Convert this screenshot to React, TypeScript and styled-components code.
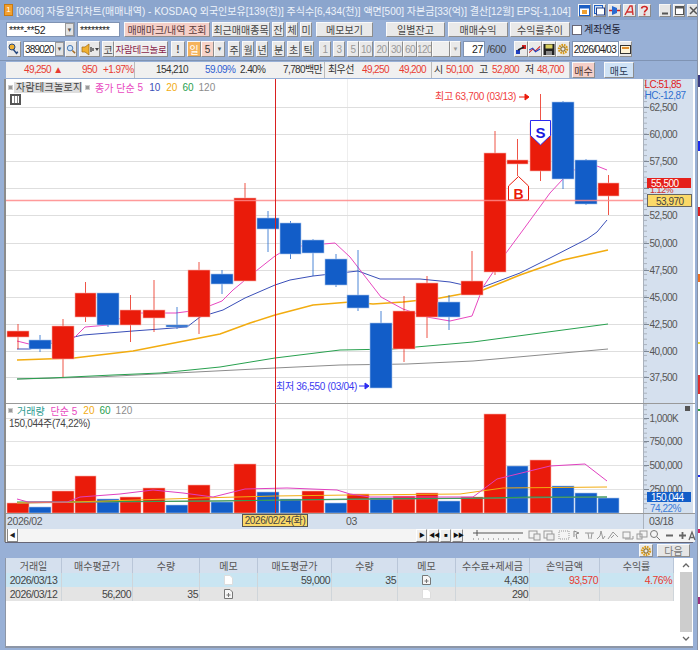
import React from "react"
import styled, { createGlobalStyle } from "styled-components"

const FONT = `"Liberation Sans", "Noto Sans CJK KR", sans-serif`

const GlobalStyle = createGlobalStyle`
  html, body {
    margin: 0;
    padding: 0;
    background: #fff;
  }
`

const Page = styled.div`
  width: 700px;
  height: 650px;
  overflow: hidden;
  position: relative;
  background: #fff;
  font-family: ${FONT};
  font-size: 10px;
  color: #333;
`

const Window = styled.div`
  width: 698px;
  height: 650px;
  box-sizing: border-box;
  display: flex;
  flex-direction: column;
  background: #98b0d6;
  border-right: 1px solid #8793a8;
`

// bits of the window behind, showing past the right edge
const BehindMark = styled.i<{ $top: number; $h: number; $c: string }>`
  position: absolute;
  left: 698px;
  top: ${(p) => p.$top}px;
  width: 2px;
  height: ${(p) => p.$h}px;
  background: ${(p) => p.$c};
`

const TitleBar = styled.div`
  height: 20px;
  flex: none;
  display: flex;
  align-items: center;
  padding-left: 4px;
  background: #8ba5cd;
  color: #eef3fa;
  font-size: 10px;
  white-space: nowrap;
  overflow: hidden;
`

const TitleBadge = styled.span`
  width: 9px;
  height: 12px;
  flex: none;
  background: #f3a02e;
  border: 1px solid #c77a12;
  box-sizing: border-box;
  color: #fff;
  font-size: 8px;
  line-height: 10px;
  text-align: center;
  margin-right: 3px;
`

const TitleText = styled.span`
  flex: none;
  width: 561px;
`

const TitleIcons = styled.div`
  display: flex;
  gap: 2px;
  margin-left: 1px;
`

const WinButton = styled.div<{ $ml?: number; $w?: number }>`
  width: ${(p) => p.$w ?? 13}px;
  height: 13px;
  margin-left: ${(p) => p.$ml ?? 0}px;
  background: #e6e6e6;
  border: 1px solid #f6f6f6;
  border-right-color: #8a8a8a;
  border-bottom-color: #8a8a8a;
  box-sizing: border-box;
  display: flex;
  align-items: center;
  justify-content: center;
`

const Row = styled.div<{ $h: number; $mt: number }>`
  height: ${(p) => p.$h}px;
  margin-top: ${(p) => p.$mt}px;
  flex: none;
  display: flex;
  align-items: stretch;
  padding-left: 6px;
`

const Field = styled.div<{ $w: number; $ml?: number; $right?: boolean; $tight?: boolean }>`
  width: ${(p) => p.$w}px;
  margin-left: ${(p) => p.$ml ?? 0}px;
  flex: none;
  box-sizing: border-box;
  background: #fff;
  border: 1px solid #7f93b3;
  display: flex;
  align-items: center;
  justify-content: ${(p) => (p.$right ? "flex-end" : "flex-start")};
  padding: 0 1px 0 ${(p) => (p.$tight ? 1 : 2)}px;
  font-size: ${(p) => (p.$tight ? 10 : 10.5)}px;
  letter-spacing: ${(p) => (p.$tight ? -0.8 : -0.4)}px;
  color: #222;
  overflow: hidden;
  white-space: nowrap;
`

const DropArrow = styled.span`
  width: 9px;
  align-self: stretch;
  margin-left: auto;
  margin-right: -1px;
  flex: none;
  background: #e2e2e2;
  border: 1px solid #9a9a9a;
  box-sizing: border-box;
  color: #555;
  font-size: 6px;
  line-height: 12px;
  text-align: center;
  letter-spacing: 0;
`

const Btn = styled.div<{ $w: number; $ml?: number; $bg?: string; $fg?: string; $tiny?: boolean }>`
  width: ${(p) => p.$w}px;
  margin-left: ${(p) => p.$ml ?? 0}px;
  flex: none;
  box-sizing: border-box;
  background: ${(p) => p.$bg ?? "#e9e9e9"};
  color: ${(p) => p.$fg ?? "#444"};
  border: 1px solid #fafafa;
  border-right-color: #8d8d8d;
  border-bottom-color: #8d8d8d;
  display: flex;
  align-items: center;
  justify-content: center;
  font-size: ${(p) => (p.$tiny ? 6 : 10)}px;
  white-space: nowrap;
  overflow: hidden;
`

const CodeName = styled(Btn)`
  font-size: 9.5px;
  letter-spacing: -0.2px;
`

const PeriodBtn = styled(Btn)`
  color: #999;
  letter-spacing: -0.5px;
`

const CheckBox = styled.span`
  width: 10px;
  height: 10px;
  margin: 3px 2px 0 2px;
  flex: none;
  background: #fff;
  border: 1px solid #667;
  box-sizing: border-box;
`

const CheckLabel = styled.span`
  font-size: 10px;
  line-height: 16px;
  color: #223;
`

const PlainText = styled.span<{ $ml?: number }>`
  margin-left: ${(p) => p.$ml ?? 0}px;
  font-size: 10.5px;
  letter-spacing: -0.4px;
  line-height: 17px;
  color: #444;
`

const IconBtn = styled.div<{ $ml?: number; $w?: number }>`
  width: ${(p) => p.$w ?? 14}px;
  margin-left: ${(p) => p.$ml ?? 0}px;
  flex: none;
  box-sizing: border-box;
  background: #e9e9e9;
  border: 1px solid #fafafa;
  border-right-color: #8d8d8d;
  border-bottom-color: #8d8d8d;
  display: flex;
  align-items: center;
  justify-content: center;
  overflow: hidden;
`

const QuoteRow = styled.div`
  height: 18px;
  margin-top: 3px;
  padding-top: 1px;
  border-top: 1px solid #7f93b3;
  box-sizing: border-box;
  flex: none;
  display: flex;
  padding-left: 6px;
  align-items: stretch;
`

const QuoteCell = styled.div<{ $w: number }>`
  width: ${(p) => p.$w}px;
  flex: none;
  position: relative;
  box-sizing: border-box;
  background: #f0f0f0;
  border-right: 1px solid #bbb;
  font-size: 10px;
  letter-spacing: -0.6px;
  line-height: 16px;
  overflow: hidden;
  white-space: nowrap;
`

const Quote = styled.span<{ $x: number; $c?: string }>`
  position: absolute;
  left: ${(p) => p.$x}px;
  top: 0;
  color: ${(p) => p.$c ?? "#333"};
`

const ChartFrame = styled.div`
  margin-left: 4px;
  margin-top: 1px;
  width: 689px;
  flex: none;
  border-left: 2px solid #8c8c8c;
  display: flex;
  flex-direction: column;
  background: #fff;
`

const Pane = styled.div<{ $h: number }>`
  height: ${(p) => p.$h}px;
  flex: none;
  display: flex;
  border-bottom: 1px solid #999;
  position: relative;
`

const Plot = styled.svg`
  width: 637px;
  height: 100%;
  display: block;
  flex: none;
  font-family: ${FONT};
`

const Axis = styled.svg`
  width: 50px;
  height: 100%;
  display: block;
  flex: none;
  background: #d5e0ee;
  font-family: ${FONT};
  letter-spacing: -0.5px;
`

const Legend = styled.div<{ $top: number }>`
  position: absolute;
  left: 2px;
  top: ${(p) => p.$top}px;
  height: 12px;
  display: flex;
  align-items: center;
  font-size: 10px;
  white-space: nowrap;
`

const LegendDot = styled.i<{ $ml?: number }>`
  width: 3px;
  height: 3px;
  margin-left: ${(p) => p.$ml ?? 0}px;
  background: #999;
  border: 1px solid #ccc;
  flex: none;
`

const LegendChip = styled.span`
  margin-left: 1px;
  padding: 0 2px;
  width: 64px;
  height: 11px;
  line-height: 11px;
  background: #ddd;
  color: #444;
  font-size: 10px;
  letter-spacing: 0.3px;
`

const LegendItem = styled.span<{ $c: string; $ml: number }>`
  margin-left: ${(p) => p.$ml}px;
  color: ${(p) => p.$c};
`

const LegendNote = styled.div`
  position: absolute;
  left: 3px;
  top: 11px;
  font-size: 10px;
  letter-spacing: -0.3px;
  color: #444;
`

const GridToggle = styled.div`
  position: absolute;
  left: 4px;
  top: 15px;
  width: 11px;
  height: 11px;
  box-sizing: border-box;
  border: 2px solid #555;
  background: repeating-linear-gradient(90deg, #fff 0 2px, #888 2px 3px);
`

const TimeAxis = styled.div`
  height: 15px;
  flex: none;
  display: flex;
  background: #d5e0ee;
  font-size: 10.5px;
  letter-spacing: -0.4px;
  line-height: 15px;
  color: #555;
`

const TimeTrack = styled.div`
  width: 637px;
  flex: none;
  position: relative;
  padding-left: 1px;
  box-sizing: border-box;
`

const TimeMark = styled.span`
  position: absolute;
  left: 340px;
`

const TimeEnd = styled.div`
  width: 50px;
  flex: none;
  border-left: 1px solid #aab2bd;
  box-sizing: border-box;
  padding-left: 5px;
`

const DateTip = styled.div`
  position: absolute;
  left: 236px;
  top: 0;
  width: 66px;
  height: 13px;
  background: #fbd968;
  border: 1px solid #555;
  box-sizing: border-box;
  font-size: 10px;
  letter-spacing: -0.4px;
  line-height: 11px;
  text-align: center;
  color: #444;
  white-space: nowrap;
`

const NavBar = styled.div`
  height: 13px;
  flex: none;
  margin-left: 4px;
  width: 689px;
  border-left: 2px solid #8c8c8c;
  display: flex;
  align-items: stretch;
  background: #f4f4f4;
`

const NavArrow = styled.div`
  width: 11px;
  margin-left: 1px;
  flex: none;
  background: #fff;
  border: 1px solid #888;
  border-top: none;
  box-sizing: border-box;
  font-size: 6px;
  line-height: 12px;
  text-align: center;
  color: #222;
`

const NavSpacer = styled.div`
  width: 398px;
  flex: none;
`

const NavPlay = styled.div`
  width: 11px;
  margin-right: 1px;
  flex: none;
  box-sizing: border-box;
  background: #eee;
  border: 1px solid #fff;
  border-right-color: #888;
  border-bottom-color: #888;
  font-size: 6px;
  line-height: 11px;
  text-align: center;
  color: #111;
  letter-spacing: -1px;
`

const NavTools = styled.svg`
  width: 224px;
  height: 13px;
  margin-left: 8px;
  flex: none;
  display: block;
`

const ActionBar = styled.div`
  height: 16px;
  flex: none;
  margin-left: 5px;
  width: 688px;
  display: flex;
  justify-content: flex-end;
  align-items: stretch;
  padding: 1px 3px 1px 0;
  box-sizing: border-box;
  background: #98b0d6;
  border-top: 1px solid #667;
`

const NextButton = styled(Btn)`
  background: #e6e6e6;
  color: #777;
`

const GridArea = styled.div`
  height: 88px;
  flex: none;
  margin-left: 5px;
  width: 687px;
  box-sizing: content-box;
  display: flex;
  background: #fff;
  border-left: 1px solid #8d96a6;
  border-bottom: 2px solid #8d96a6;
`

const TableBody = styled.div`
  width: 668px;
  flex: none;
`

const TableRow = styled.div<{ $bg: string; $h: number }>`
  display: grid;
  grid-template-columns: 56px 71px 67px 58px 74px 66px 58px 74px 70px 74px;
  height: ${(p) => p.$h}px;
  background: ${(p) => p.$bg};
`

const Cell = styled.div<{ $center?: boolean; $c?: string }>`
  box-sizing: border-box;
  border-right: 1px solid #cfd5da;
  padding: 0 1px;
  font-size: 10.5px;
  letter-spacing: -0.5px;
  color: ${(p) => p.$c ?? "#444"};
  display: flex;
  align-items: center;
  justify-content: ${(p) => (p.$center ? "center" : "flex-end")};
  white-space: nowrap;
  overflow: hidden;
`

const HeadCell = styled.div`
  box-sizing: border-box;
  border-right: 1px solid #b9c6d8;
  font-size: 10px;
  color: #555;
  display: flex;
  align-items: center;
  justify-content: center;
  white-space: nowrap;
  overflow: hidden;
`

const ScrollBar = styled.div`
  width: 12px;
  margin-left: 6px;
  flex: none;
  display: flex;
  flex-direction: column;
  background: #fff;
  align-items: stretch;
`

const ScrollArrow = styled.div`
  height: 14px;
  flex: none;
  display: flex;
  align-items: center;
  justify-content: center;
`

const ScrollThumb = styled.div`
  flex: 1;
  background: #cdcdcd;
`

type Candle = [number, number, number, number, number, number, "r" | "b"]

// x, width, body top, body bottom, wick top, wick bottom, colour
const candles: Candle[] = [
  [7, 22, 331, 337, 324, 349, "r"],
  [29, 22, 340, 349, 335, 352, "b"],
  [52, 22, 326, 359, 319, 377, "r"],
  [75, 21, 293, 317, 282, 322, "r"],
  [97, 22, 293, 325, 293, 327, "b"],
  [120, 21, 310, 325, 295, 342, "r"],
  [143, 22, 310, 318, 280, 332, "r"],
  [166, 22, 325, 327, 307, 329, "b"],
  [188, 22, 270, 317, 262, 334, "r"],
  [211, 22, 274, 284, 270, 294, "b"],
  [234, 22, 198, 281, 183, 281, "r"],
  [257, 22, 218, 229, 211, 252, "b"],
  [280, 21, 223, 254, 221, 259, "b"],
  [302, 22, 240, 253, 239, 276, "b"],
  [325, 22, 259, 285, 254, 287, "b"],
  [347, 22, 295, 308, 250, 311, "b"],
  [370, 22, 323, 388, 311, 388, "b"],
  [393, 22, 311, 349, 296, 362, "r"],
  [416, 22, 283, 317, 276, 338, "r"],
  [438, 22, 302, 317, 295, 330, "b"],
  [461, 22, 281, 295, 251, 295, "r"],
  [484, 22, 153, 272, 131, 275, "r"],
  [507, 21, 160, 164, 139, 176, "r"],
  [530, 21, 123, 171, 94, 181, "r"],
  [552, 22, 102, 179, 101, 189, "b"],
  [575, 22, 160, 204, 159, 205, "b"],
  [598, 21, 183, 196, 175, 215, "r"],
]

// top of each volume bar, same order as candles
const volumes: [number, "r" | "b"][] = [
  [503, "r"], [507, "b"], [491, "r"], [476, "r"], [499, "b"], [497, "r"], [488, "r"],
  [505, "b"], [485, "r"], [502, "b"], [464, "r"], [492, "b"], [499, "b"], [491, "r"],
  [503, "b"], [494, "r"], [498, "b"], [496, "r"], [493, "r"], [501, "b"], [497, "r"],
  [414, "r"], [466, "b"], [460, "r"], [486, "b"], [493, "b"], [498, "b"],
]

const behindMarks: [number, number, string][] = [
  [75, 12, "#3a3a80"], [141, 10, "#1a2af0"], [207, 9, "#e02020"], [274, 8, "#f07020"],
  [342, 2, "#f0e030"], [375, 19, "#e03030"], [409, 2, "#30a040"], [475, 2, "#1a2af0"],
  [529, 4, "#e02060"], [597, 7, "#a03080"],
]

const RED = "#ea1b0a"
const BLUE = "#125dc8"
const colorOf = (c: "r" | "b") => (c === "r" ? RED : BLUE)
const fringeOf = (c: "r" | "b") => (c === "r" ? "#f7b0a8" : "#a9c3ea")

const ma5 = "17,341 29,344 74,338 85,327 108,325 130,313 176,313 199,310 222,301 233,290 256,271 275,256 290,247 335,243 350,257 381,297 403,309 427,317 450,321 472,316 483,287 506,253 523,230 550,193 563,179 574,170 597,166 607,170"
const ma10 = "17,349 30,349 74,337 83,335 133,331 187,327 200,317 223,310 245,298 275,285 290,280 313,276 358,271 380,279 420,279 450,282 473,287 483,287 520,273 550,258 587,239 597,232 607,220"
const ma20 = "17,360 74,358 133,351 220,334 250,323 275,315 313,305 350,302 373,304 403,302 440,298 483,290 520,275 563,260 608,250"
const ma60 = "17,379 50,378 113,375 160,373 220,367 275,358 340,350 393,349 473,342 608,324"
const ma120 = "17,379 97,377 275,368 340,365 407,364 473,361 608,349"

const vol5 = "17,499 28,502 67,502 80,497 120,494 153,490 183,493 213,497 245,489 287,488 337,490 350,494 370,497 473,497 497,479 550,466 585,464 607,481"
const vol20 = "17,503 73,502 200,498 275,496 350,495 460,494 503,488 607,487"
const vol60 = "17,502 220,501 350,499 488,498 530,497 607,497"
const vol120 = "17,503 300,500 607,497"

const priceLevels: [number, string][] = [
  [107, "62,500"], [134, "60,000"], [161, "57,500"], [188, ""], [215, "52,500"],
  [243, "50,000"], [270, "47,500"], [297, "45,000"], [324, "42,500"], [351, "40,000"], [377, "37,500"],
]

const volumeLevels: [number, string][] = [
  [418, "1,000K"], [441, "750,000"], [465, "500,000"], [489, "250,000"],
]

const range = (from: number, to: number, step: number) => {
  const out: number[] = []
  for (let v = from; v <= to; v += step) out.push(v)
  return out
}

const Glyph: React.FC<{ kind: string }> = ({ kind }) => {
  switch (kind) {
    case "window":
      return (
        <svg width="11" height="11" viewBox="0 0 11 11">
          <rect x="0.5" y="0.5" width="10" height="10" fill="#fff" stroke="#1c5fc4" />
          <rect x="0.5" y="0.5" width="10" height="3" fill="#1c5fc4" />
          <rect x="3" y="5" width="5" height="4" fill="#f0a030" />
        </svg>
      )
    case "cascade":
      return (
        <svg width="11" height="11" viewBox="0 0 11 11">
          <rect x="0.5" y="0.5" width="8" height="8" fill="#cfe0f6" stroke="#1c5fc4" />
          <rect x="2.5" y="3" width="8" height="7" fill="#fff" stroke="#23408a" />
        </svg>
      )
    case "pin":
      return (
        <svg width="11" height="11" viewBox="0 0 11 11">
          <path d="M0 5.5h4M7 5.5h4" stroke="#d02020" strokeWidth="1.4" />
          <path d="M3 1v9l5-2V3z" fill="#2a6ad0" />
        </svg>
      )
    case "font":
      return (
        <svg width="11" height="11" viewBox="0 0 11 11">
          <path d="M1 10L6 1h2l1 9M3 7h5" fill="none" stroke="#d03030" strokeWidth="1.4" />
        </svg>
      )
    case "help":
      return (
        <svg width="11" height="11" viewBox="0 0 11 11">
          <path d="M2.5 3.5C3 .8 8 .8 8.2 3.4c.1 2-2.7 2-2.7 4" fill="none" stroke="#d02020" strokeWidth="1.6" />
          <rect x="4.6" y="8.6" width="1.8" height="1.8" fill="#d02020" />
        </svg>
      )
    case "min":
      return (
        <svg width="9" height="9" viewBox="0 0 9 9">
          <rect x="1" y="6.5" width="6" height="2" fill="#555" />
        </svg>
      )
    case "max":
      return (
        <svg width="9" height="9" viewBox="0 0 9 9">
          <rect x="0.5" y="0.5" width="8" height="8" fill="#fff" stroke="#555" />
          <rect x="0.5" y="0.5" width="8" height="2" fill="#555" />
        </svg>
      )
    case "close":
      return (
        <svg width="9" height="9" viewBox="0 0 9 9">
          <path d="M1 1l7 7M8 1L1 8" stroke="#555" strokeWidth="1.5" />
        </svg>
      )
    case "key":
      return (
        <svg width="12" height="13" viewBox="0 0 12 13">
          <circle cx="4" cy="4" r="3" fill="#f0b030" stroke="#27497f" />
          <path d="M5 6l4 5M8 10l2-1" stroke="#27497f" strokeWidth="1.4" fill="none" />
        </svg>
      )
    case "search":
      return (
        <svg width="11" height="13" viewBox="0 0 11 13">
          <circle cx="4.5" cy="5" r="3" fill="#cfe3f7" stroke="#3a6fb0" />
          <path d="M7 7.5l3 3" stroke="#a56a20" strokeWidth="1.6" />
        </svg>
      )
    case "speaker":
      return (
        <svg width="18" height="13" viewBox="0 0 18 13">
          <path d="M1 4h3l4-3v11L4 9H1z" fill="#f0b030" stroke="#a06a10" strokeWidth="0.7" />
          <path d="M10 4v5M12 5v3" stroke="#333" strokeWidth="1.2" />
          <path d="M14 5h4l-2 3z" fill="#444" />
        </svg>
      )
    case "link":
      return (
        <svg width="12" height="13" viewBox="0 0 12 13">
          <rect x="1" y="7" width="4" height="4" fill="#2040c0" />
          <rect x="7" y="2" width="4" height="4" fill="#d02020" />
          <path d="M3 7l6-3" stroke="#222" strokeWidth="1.4" />
        </svg>
      )
    case "lines":
      return (
        <svg width="13" height="13" viewBox="0 0 13 13">
          <path d="M0 10l4-4 3 2 5-5" fill="none" stroke="#d02020" strokeWidth="1.1" />
          <path d="M0 7l4-2 3 4 5-3" fill="none" stroke="#2040c0" strokeWidth="1.1" />
        </svg>
      )
    case "save":
      return (
        <svg width="12" height="13" viewBox="0 0 12 13">
          <rect x="0.5" y="1" width="11" height="11" fill="#222" />
          <rect x="2.5" y="1.5" width="7" height="4" fill="#d8d060" />
          <rect x="3" y="8" width="6" height="4" fill="#888" />
        </svg>
      )
    case "gear":
      return (
        <svg width="12" height="12" viewBox="0 0 12 12">
          <circle cx="6" cy="6" r="4" fill="none" stroke="#d89a18" strokeWidth="2.4" strokeDasharray="1.6 0.8" />
          <circle cx="6" cy="6" r="2.2" fill="none" stroke="#7a5a10" strokeWidth="1" />
        </svg>
      )
    case "calendar":
      return (
        <svg width="11" height="11" viewBox="0 0 11 11">
          <rect x="0.5" y="1.5" width="10" height="8" fill="#fdf3d8" stroke="#333" />
          <rect x="2" y="3" width="7" height="2" fill="#e09030" />
        </svg>
      )
    default:
      return null
  }
}

const MemoIcon: React.FC<{ plus?: boolean }> = ({ plus }) => (
  <svg width="9" height="10" viewBox="0 0 9 10">
    <path
      d="M.5.5h5.5l2.500 2.500v6.500h-8z"
      fill={plus ? "#f6f6f6" : "#fff"}
      stroke={plus ? "#777" : "#ddd"}
    />
    {plus && <path d="M2.500 6h4M4.500 4v4" stroke="#777" />}
  </svg>
)

const header = ["거래일", "매수평균가", "수량", "메모", "매도평균가", "수량", "메모", "수수료+제세금", "손익금액", "수익률"]

const App: React.FC = () => {
  return (
    <Page>
      <GlobalStyle />
      <Window>
        <TitleBar>
          <TitleBadge>1</TitleBadge>
          <TitleText>
            [0606] 자동일지차트(매매내역) - KOSDAQ 외국인보유[139(천)] 주식수[6,434(천)] 액면[500] 자본금[33(억)] 결산[12월] EPS[-1,104]
          </TitleText>
          <TitleIcons>
            <WinButton><Glyph kind="window" /></WinButton>
            <WinButton><Glyph kind="cascade" /></WinButton>
            <WinButton><Glyph kind="pin" /></WinButton>
            <WinButton><Glyph kind="font" /></WinButton>
            <WinButton><Glyph kind="help" /></WinButton>
            <WinButton $ml={6} $w={12}><Glyph kind="min" /></WinButton>
            <WinButton $w={12}><Glyph kind="max" /></WinButton>
            <WinButton $w={12}><Glyph kind="close" /></WinButton>
          </TitleIcons>
        </TitleBar>

        <Row $h={15} $mt={2}>
          <Field $w={69}>****-**52<DropArrow>▼</DropArrow></Field>
          <Field $w={43} $ml={2}>********</Field>
          <Btn $w={86} $ml={4} $bg="#f5cfc8" $fg="#5a3a3a">매매마크/내역 조회</Btn>
          <Btn $w={58} $ml={2}>최근매매종목</Btn>
          <Btn $w={12} $ml={2}>잔</Btn>
          <Btn $w={12} $ml={2}>체</Btn>
          <Btn $w={12} $ml={2}>미</Btn>
          <Btn $w={57} $ml={4}>메모보기</Btn>
          <Btn $w={59} $ml={13}>일별잔고</Btn>
          <Btn $w={60} $ml={3}>매매수익</Btn>
          <Btn $w={60} $ml={2}>수익률추이</Btn>
          <CheckBox />
          <CheckLabel>계좌연동</CheckLabel>
        </Row>

        <Row $h={16} $mt={4}>
          <IconBtn $ml={1}><Glyph kind="key" /></IconBtn>
          <Field $w={42} $ml={2} $tight>389020<DropArrow>▼</DropArrow></Field>
          <IconBtn $w={12}><Glyph kind="search" /></IconBtn>
          <IconBtn $ml={2} $w={21}><Glyph kind="speaker" /></IconBtn>
          <Btn $w={12} $ml={2}>코</Btn>
          <CodeName $w={54} $bg="#efefef" $fg="#8a1f4a">자람테크놀로</CodeName>
          <Btn $w={14} $ml={3}><b>!</b></Btn>
          <Btn $w={14} $ml={2} $bg="#f5b35c" $fg="#fff">일</Btn>
          <Btn $w={13} $bg="#f7d3c8" $fg="#333">5</Btn>
          <Btn $w={11} $fg="#555" $tiny>▼</Btn>
          <Btn $w={12} $ml={3}>주</Btn>
          <Btn $w={12} $ml={2}>월</Btn>
          <Btn $w={12} $ml={2}>년</Btn>
          <Btn $w={13} $ml={4}>분</Btn>
          <Btn $w={13} $ml={2}>초</Btn>
          <Btn $w={12} $ml={2}>틱</Btn>
          <PeriodBtn $w={12} $ml={5}>1</PeriodBtn>
          <PeriodBtn $w={12} $ml={2}>3</PeriodBtn>
          <PeriodBtn $w={12} $ml={2}>5</PeriodBtn>
          <PeriodBtn $w={14}>10</PeriodBtn>
          <PeriodBtn $w={15} $ml={1}>20</PeriodBtn>
          <PeriodBtn $w={14}>30</PeriodBtn>
          <PeriodBtn $w={14}>60</PeriodBtn>
          <PeriodBtn $w={15}>120</PeriodBtn>
          <Btn $w={18} $bg="#eee" />
          <Btn $w={11} $fg="#999" $tiny>▼</Btn>
          <Field $w={22} $ml={2} $right>27</Field>
          <PlainText $ml={2}>/600</PlainText>
          <IconBtn $ml={8}><Glyph kind="link" /></IconBtn>
          <IconBtn><Glyph kind="lines" /></IconBtn>
          <IconBtn><Glyph kind="save" /></IconBtn>
          <IconBtn><Glyph kind="gear" /></IconBtn>
          <Field $w={47} $ml={2} $tight>2026/04/03</Field>
          <IconBtn $w={13}><Glyph kind="calendar" /></IconBtn>
        </Row>

        <QuoteRow>
          <QuoteCell $w={129}>
            <Quote $x={18} $c="#e83a30">49,250 ▲</Quote>
            <Quote $x={76} $c="#e83a30">950</Quote>
            <Quote $x={97} $c="#e83a30">+1.97%</Quote>
          </QuoteCell>
          <QuoteCell $w={190}>
            <Quote $x={21}>154,210</Quote>
            <Quote $x={70} $c="#2f5fd0">59.09%</Quote>
            <Quote $x={105}>2.40%</Quote>
            <Quote $x={148}>7,780백만</Quote>
          </QuoteCell>
          <QuoteCell $w={107}>
            <Quote $x={3}>최우선</Quote>
            <Quote $x={37} $c="#e83a30">49,250</Quote>
            <Quote $x={74} $c="#e83a30">49,200</Quote>
          </QuoteCell>
          <QuoteCell $w={138}>
            <Quote $x={2}>시</Quote>
            <Quote $x={14} $c="#e83a30">50,100</Quote>
            <Quote $x={47}>고</Quote>
            <Quote $x={60} $c="#e83a30">52,800</Quote>
            <Quote $x={93}>저</Quote>
            <Quote $x={105} $c="#e83a30">48,700</Quote>
          </QuoteCell>
          <Btn $w={23} $ml={2} $bg="#f5cfc8" $fg="#4a3030">매수</Btn>
          <Btn $w={30} $ml={9} $bg="#cfe2f5" $fg="#2a3a55">매도</Btn>
        </QuoteRow>

        <ChartFrame>
          <Pane $h={324}>
            <Plot viewBox="6 79 637 324">
              <line x1="347.500" x2="347.500" y1="79" y2="403" stroke="#eee" />
              {priceLevels.map(([y]) => (
                <line key={y} x1="6" x2="643" y1={y + 0.5} y2={y + 0.5} stroke="#dedede" strokeWidth="1.2" />
              ))}
              <polyline points={ma120} fill="none" stroke="#8c8c8c" />
              <polyline points={ma60} fill="none" stroke="#27a04e" />
              <polyline points={ma20} fill="none" stroke="#f2ac10" strokeWidth="1.6" />
              <polyline points={ma10} fill="none" stroke="#3a4fb8" />
              <polyline points={ma5} fill="none" stroke="#e848c0" />
              {candles.map(([x, w, top, bottom, wickTop, wickBottom, c]) => (
                <g key={x}>
                  <line x1={x + w / 2} x2={x + w / 2} y1={wickTop} y2={wickBottom} stroke={colorOf(c)} strokeOpacity="0.75" />
                  <rect x={x} y={top} width={w} height={bottom - top} fill={colorOf(c)} stroke={fringeOf(c)} strokeWidth="0.6" />
                </g>
              ))}
              <line x1="6" x2="643" y1="200.500" y2="200.500" stroke="#f88" strokeOpacity="0.85" strokeWidth="1.5" />
              <line x1="275.500" x2="275.500" y1="79" y2="403" stroke="#d92020" />
              <path d="M508.500 200V186l10-9.500 10 9.500v14z" fill="#fff" stroke={RED} />
              <text x="518.500" y="199" textAnchor="middle" fontSize="14" fontWeight="700" fill={RED}>B</text>
              <path d="M530.500 120.500h20v15l-10 9.500-10-9.500z" fill="#fff" stroke="#2a2af0" />
              <text x="540.500" y="138" textAnchor="middle" fontSize="15" fontWeight="700" fill="#1a1ae0">S</text>
              <text x="435" y="100" fontSize="10" letterSpacing="-0.3" fill="#f04040">최고 63,700 (03/13)</text>
              <path d="M519 97h9M525 94l4 3-4 3z" fill={RED} stroke={RED} />
              <text x="276" y="390" fontSize="10" letterSpacing="-0.3" fill="#3a3af0">최저 36,550 (03/04)</text>
              <path d="M359 386h9M365 383l4 3-4 3z" fill="#2a2af0" stroke="#2a2af0" />
            </Plot>
            <Axis viewBox="643 79 50 324">
              <line x1="643.500" x2="643.500" y1="79" y2="403" stroke="#aab2bd" />
              {range(80, 402, 5.400).map((y) => (
                <line key={y} x1="644" x2="647" y1={y} y2={y} stroke="#aab2bd" />
              ))}
              {priceLevels.map(([y, label]) => (
                <g key={y}>
                  <line x1="644" x2="649" y1={y + 0.5} y2={y + 0.5} stroke="#7d8794" />
                  <text x="649.500" y={y + 4} fontSize="10" fill="#555">{label}</text>
                </g>
              ))}
              <text x="644.500" y="88" fontSize="10" fill="#e02020">LC:51,85</text>
              <text x="644.500" y="99" fontSize="10" fill="#2f6fd0">HC:-12,87</text>
              <text x="650" y="193" fontSize="9" fill="#d03030">1.12%</text>
              <rect x="647" y="178" width="44" height="10" fill="#e5201a" />
              <text x="651" y="187" fontSize="10" fill="#fff">55,500</text>
              <rect x="647.500" y="194.500" width="44" height="12" fill="#fbd968" stroke="#666" />
              <text x="656" y="204.500" fontSize="10" fill="#444">53,970</text>
            </Axis>
            <Legend $top={2}>
              <LegendDot />
              <LegendChip>자람테크놀로지</LegendChip>
              <LegendDot $ml={3} />
              <LegendItem $c="#e848c0" $ml={5}>종가 단순</LegendItem>
              <LegendItem $c="#e848c0" $ml={3}>5</LegendItem>
              <LegendItem $c="#3a4fb8" $ml={6}>10</LegendItem>
              <LegendItem $c="#f2ac10" $ml={6}>20</LegendItem>
              <LegendItem $c="#27a04e" $ml={5}>60</LegendItem>
              <LegendItem $c="#8c8c8c" $ml={5}>120</LegendItem>
            </Legend>
            <GridToggle />
          </Pane>

          <Pane $h={109}>
            <Plot viewBox="6 404 637 109">
              <line x1="347.500" x2="347.500" y1="404" y2="513" stroke="#eee" />
              {volumeLevels.map(([y]) => (
                <line key={y} x1="6" x2="643" y1={y + 0.5} y2={y + 0.5} stroke="#e2e2e2" strokeWidth="1.2" />
              ))}
              {candles.map(([x, w], i) => (
                <rect
                  key={x}
                  x={x}
                  y={volumes[i][0]}
                  width={w}
                  height={513 - volumes[i][0]}
                  fill={colorOf(volumes[i][1])}
                  stroke={fringeOf(volumes[i][1])}
                  strokeWidth="0.6"
                />
              ))}
              <polyline points={vol120} fill="none" stroke="#8c8c8c" />
              <polyline points={vol60} fill="none" stroke="#27a04e" />
              <polyline points={vol20} fill="none" stroke="#f2ac10" />
              <polyline points={vol5} fill="none" stroke="#e040c0" />
              <line x1="275.500" x2="275.500" y1="404" y2="513" stroke="#d92020" />
            </Plot>
            <Axis viewBox="643 404 50 109">
              <line x1="643.500" x2="643.500" y1="404" y2="513" stroke="#aab2bd" />
              {range(405, 512, 4.700).map((y) => (
                <line key={y} x1="644" x2="647" y1={y} y2={y} stroke="#aab2bd" />
              ))}
              {volumeLevels.map(([y, label]) => (
                <g key={y}>
                  <line x1="644" x2="649" y1={y + 0.5} y2={y + 0.5} stroke="#7d8794" />
                  <text x="649.500" y={y + 4} fontSize="10" fill="#555">{label}</text>
                </g>
              ))}
              <rect x="685" y="406" width="5" height="5" fill="#555" />
              <text x="650" y="512" fontSize="10" fill="#3a7ad8">74,22%</text>
              <rect x="647" y="492" width="44" height="10" fill="#125dc8" />
              <text x="651" y="501" fontSize="10" fill="#fff">150,044</text>
            </Axis>
            <Legend $top={0}>
              <LegendDot />
              <LegendItem $c="#2a9a90" $ml={4}>거래량</LegendItem>
              <LegendItem $c="#e848c0" $ml={6}>단순 5</LegendItem>
              <LegendItem $c="#f2ac10" $ml={6}>20</LegendItem>
              <LegendItem $c="#27a04e" $ml={5}>60</LegendItem>
              <LegendItem $c="#8c8c8c" $ml={5}>120</LegendItem>
            </Legend>
            <LegendNote>150,044주(74,22%)</LegendNote>
          </Pane>

          <TimeAxis>
            <TimeTrack>
              2026/02
              <TimeMark>03</TimeMark>
              <DateTip>2026/02/24(화)</DateTip>
            </TimeTrack>
            <TimeEnd>03/18</TimeEnd>
          </TimeAxis>
        </ChartFrame>

        <NavBar>
          <NavArrow>◀</NavArrow>
          <NavSpacer />
          <NavPlay>▶</NavPlay>
          <NavPlay>◀◀</NavPlay>
          <NavPlay>■</NavPlay>
          <NavPlay>▶▶</NavPlay>
          <NavTools viewBox="0 0 224 13">
            <path d="M1 4h50M5 1v6" stroke="#555" fill="none" />
            <path d="M1 10h50" stroke="#777" strokeDasharray="1 4" />
            <g fill="none" stroke="#999">
              <rect x="57" y="2" width="8" height="7" />
              <rect x="62" y="5" width="6" height="6" fill="#eee" />
              <rect x="72" y="2" width="8" height="7" />
              <rect x="75" y="5" width="7" height="6" fill="#eee" />
              <rect x="87" y="2" width="10" height="8" strokeDasharray="1 1" />
              <path d="M102 2l5 2-3 1 1 5M102 2v6" stroke="#888" />
              <path d="M113 4h9M116 4l1 6M120 4l-1 6" />
              <path d="M125 10l3-3 1-5 2 8 2-3" />
              <path d="M136 10l5-7 5 5M139 9l3-3" />
              <rect x="151" y="3" width="7" height="6" />
              <path d="M153 10h8v-3" />
              <rect x="165" y="5" width="5" height="5" />
              <rect x="168" y="2" width="7" height="6" />
              <circle cx="182" cy="5" r="3.500" stroke="#777" />
              <path d="M185 8l3 3" stroke="#777" />
            </g>
            <path d="M194 6.500h7M207 6.500h7M210.500 3v7" stroke="#666" strokeWidth="1.800" />
            <path d="M217 11l3-8 3 8M218 8.500h4" fill="none" stroke="#666" strokeWidth="1.300" />
          </NavTools>
        </NavBar>

        <ActionBar>
          <IconBtn><Glyph kind="gear" /></IconBtn>
          <NextButton $w={33} $ml={4}>다음</NextButton>
        </ActionBar>

        <GridArea>
          <TableBody>
            <TableRow $bg="#d5e0ee" $h={15}>
              {header.map((h, i) => (
                <HeadCell key={i}>{h}</HeadCell>
              ))}
            </TableRow>
            <TableRow $bg="#c9e5f2" $h={14}>
              <Cell $center>2026/03/13</Cell>
              <Cell />
              <Cell />
              <Cell $center><MemoIcon /></Cell>
              <Cell>59,000</Cell>
              <Cell>35</Cell>
              <Cell $center><MemoIcon plus /></Cell>
              <Cell>4,430</Cell>
              <Cell $c="#e83a30">93,570</Cell>
              <Cell $c="#e83a30">4.76%</Cell>
            </TableRow>
            <TableRow $bg="#e4e4e4" $h={14}>
              <Cell $center>2026/03/12</Cell>
              <Cell>56,200</Cell>
              <Cell>35</Cell>
              <Cell $center><MemoIcon plus /></Cell>
              <Cell />
              <Cell />
              <Cell $center><MemoIcon /></Cell>
              <Cell>290</Cell>
              <Cell />
              <Cell />
            </TableRow>
          </TableBody>
          <ScrollBar>
            <ScrollArrow>
              <svg width="8" height="6" viewBox="0 0 8 6"><path d="M1 5l3-3 3 3" fill="none" stroke="#666" strokeWidth="1.300" /></svg>
            </ScrollArrow>
            <ScrollThumb />
            <ScrollArrow>
              <svg width="8" height="6" viewBox="0 0 8 6"><path d="M1 1l3 3 3-3" fill="none" stroke="#666" strokeWidth="1.300" /></svg>
            </ScrollArrow>
          </ScrollBar>
        </GridArea>
      </Window>
      {behindMarks.map(([top, h, c]) => (
        <BehindMark key={top} $top={top} $h={h} $c={c} />
      ))}
    </Page>
  )
}

export default App
